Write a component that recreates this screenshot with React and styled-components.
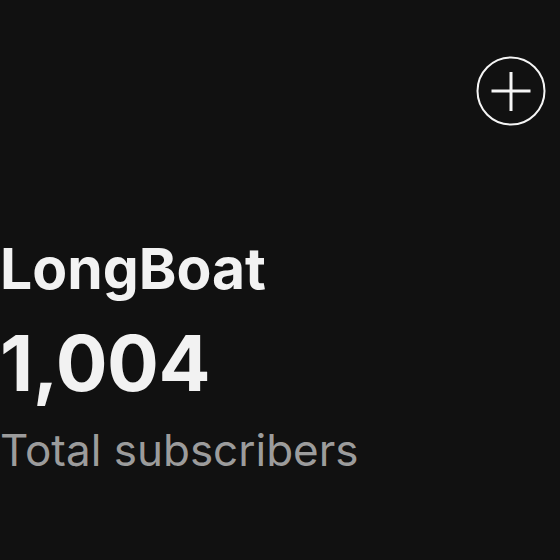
import React from "react";
import styled, { createGlobalStyle } from "styled-components";

const Global = createGlobalStyle`
  html, body { margin: 0; padding: 0; background: #111111; }
  body { font-family: Inter, "Noto Sans", sans-serif; }
`;

const Screen = styled.div`
  width: 560px;
  height: 560px;
  background: #111111;
  display: flex;
  flex-direction: column;
  overflow: hidden;
`;

const TopBar = styled.div`
  display: flex;
  justify-content: flex-end;
  padding: 56px 14px 0 0;
`;

const AddButton = styled.button`
  width: 70px;
  height: 70px;
  padding: 0;
  border: none;
  background: transparent;
  color: #f5f5f5;
  display: flex;
  align-items: center;
  justify-content: center;
`;

const Info = styled.div`
  display: flex;
  flex-direction: column;
  margin-top: 110px;
  padding-left: 0;
`;

const Title = styled.div`
  font-size: 57px;
  font-weight: 700;
  color: #f2f2f2;
  line-height: 66px;
  white-space: nowrap;
`;

const Count = styled.div`
  margin-top: 16px;
  font-size: 77px;
  font-weight: 700;
  color: #f2f2f2;
  line-height: 90px;
  letter-spacing: -0.5px;
  white-space: nowrap;
`;

const Label = styled.div`
  margin-top: 14px;
  font-size: 44px;
  font-weight: 400;
  color: #9c9c9c;
  line-height: 56px;
  white-space: nowrap;
`;

export default function App() {
  return (
    <Screen>
      <Global />
      <TopBar>
        <AddButton aria-label="Add">
          <svg width="70" height="70" viewBox="0 0 70 70" fill="none" stroke="currentColor">
            <circle cx="35" cy="35" r="33.5" strokeWidth="2" />
            <path d="M35 16v39M15.5 35h39" strokeWidth="3" />
          </svg>
        </AddButton>
      </TopBar>
      <Info>
        <Title>LongBoat</Title>
        <Count>1,004</Count>
        <Label>Total subscribers</Label>
      </Info>
    </Screen>
  );
}
